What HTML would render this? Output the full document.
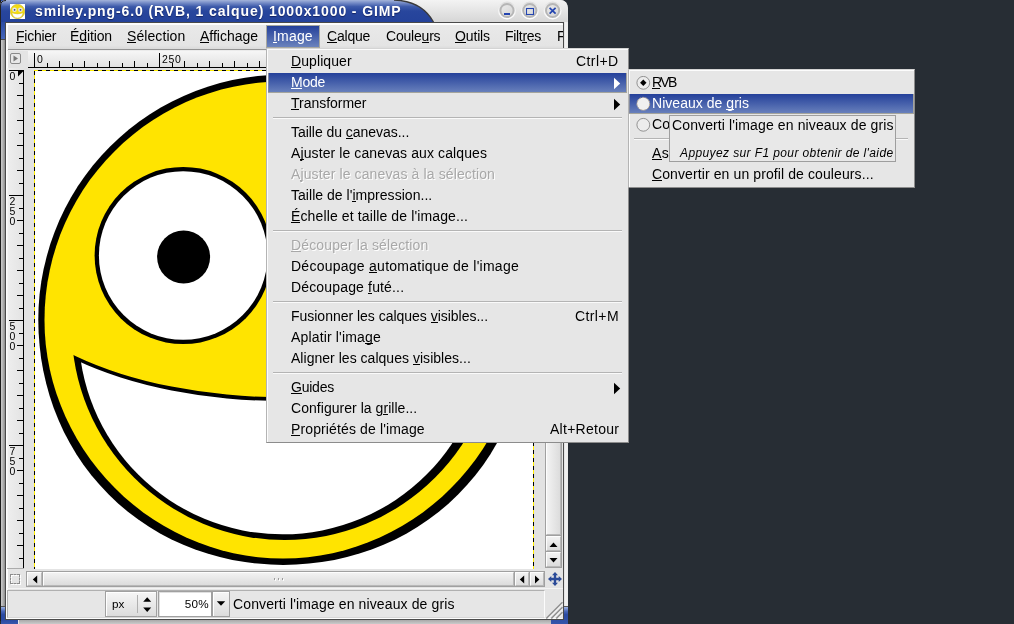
<!DOCTYPE html>
<html><head><meta charset="utf-8"><title>GIMP</title>
<style>
html,body{margin:0;padding:0;}
body{width:1014px;height:624px;overflow:hidden;background:#272d34;position:relative;font-family:"Liberation Sans",sans-serif;font-size:14px;color:#000;}
#root{position:absolute;left:0;top:0;width:1014px;height:624px;}
.a{position:absolute;}
.t{will-change:transform;position:absolute;white-space:pre;line-height:16px;height:16px;font-size:14px;}
u{text-decoration:none;background:linear-gradient(currentColor,currentColor) 0 14px/100% 1px no-repeat;}
.dis{color:#a8a8a8;text-shadow:1px 1px 0 #fff;}
.sep{position:absolute;height:1px;background:#b4b4b4;border-bottom:1px solid #fafafa;}
.hl{position:absolute;background:linear-gradient(#24409a,#6b83bd);box-shadow:inset -1px -1px 0 #a4a49c, inset 1px 0 0 #8088a0;}
.sb{position:absolute;box-sizing:border-box;border:1px solid #b8b8b8;border-top-color:#fdfdfd;border-left-color:#fdfdfd;background:linear-gradient(#f2f2f2,#dcdcdc);}
.btn{position:absolute;box-sizing:border-box;border:1px solid #a0a0a0;background:linear-gradient(#f6f6f6,#dcdcdc);box-shadow:inset 1px 1px 0 #fff;}
</style></head>
<body>
<div class="a" style="left:0;top:0;width:568px;height:621px;background:#e4e4e4;border-radius:6px 8px 0 0;"></div>
<div class="a" style="left:0;top:0;width:1px;height:621px;background:#1c1c1c;"></div>
<div class="a" style="left:1px;top:22px;width:4px;height:599px;background:linear-gradient(90deg,#cacaca 0,#b4b4b4 45%,#8c8c8c 100%);"></div>
<div class="a" style="left:1px;top:0px;width:4px;height:39px;background:linear-gradient(#2a4aa2 0,#2a4aa2 55%,#4666ba 100%);"></div>
<div class="a" style="left:1px;top:39px;width:4px;height:1px;background:#4a4a4a;"></div>
<div class="a" style="left:1px;top:606px;width:4px;height:1px;background:#555;"></div>
<div class="a" style="left:1px;top:607px;width:4px;height:17px;background:linear-gradient(#9ab0e2 0,#4a68b8 25%,#2a4aa2 45%,#2a4aa2 100%);"></div>
<div class="a" style="left:1px;top:620px;width:17px;height:4px;background:linear-gradient(#2a4aa2,#3858ac);"></div>
<div class="a" style="left:18px;top:620px;width:533px;height:4px;background:linear-gradient(#a8a8a8,#cacaca);"></div>
<div class="a" style="left:18px;top:620px;width:1px;height:4px;background:#e8e8e8;"></div>
<div class="a" style="left:551px;top:607px;width:17px;height:17px;background:linear-gradient(#a2b6e6 0,#4a68b8 25%,#2a4aa2 45%,#3454aa 100%);"></div>
<div class="a" style="left:564px;top:606px;width:4px;height:1px;background:#5a5a5a;"></div>
<div class="a" style="left:564px;top:22px;width:4px;height:584px;background:linear-gradient(90deg,#dedede 0,#f2f2f2 40%,#ececec 100%);"></div>
<div class="a" style="left:5px;top:22px;width:559px;height:598px;box-sizing:border-box;border:1px solid #4a4a4a;background:#e4e4e4;"></div>
<div class="a" style="left:6px;top:23px;width:557px;height:596px;box-sizing:border-box;border:1px solid #fdfdfd;border-left-width:2px;border-right-color:#e4e4e4;"></div>
<svg class="a" style="left:0;top:0" width="568" height="22" viewBox="0 0 568 22">
<defs>
<linearGradient id="tb" x1="0" y1="0" x2="0" y2="1"><stop offset="0" stop-color="#a4b4da"/><stop offset="0.1" stop-color="#8095cc"/><stop offset="0.3" stop-color="#3d5aaa"/><stop offset="0.5" stop-color="#28469d"/><stop offset="1" stop-color="#24429a"/></linearGradient>
<linearGradient id="tg" x1="0" y1="0" x2="0" y2="1"><stop offset="0" stop-color="#f3f3f3"/><stop offset="1" stop-color="#d6d6d6"/></linearGradient>
<linearGradient id="bh" x1="0" y1="0" x2="0" y2="1"><stop offset="0" stop-color="#dcdcdc"/><stop offset="0.5" stop-color="#f4f4f4"/><stop offset="1" stop-color="#ffffff"/></linearGradient>
<linearGradient id="bt" x1="0" y1="0" x2="1" y2="1"><stop offset="0" stop-color="#ececec"/><stop offset="1" stop-color="#d4d4d4"/></linearGradient>
</defs>
<path d="M0 22 V6 Q0 0 6 0 H560 Q567.500 0 567.500 7.500 V22 Z" fill="url(#tg)"/>
<path d="M0 22 V6 Q0 0 6 0 H394 Q422 1 433.500 22 Z" fill="url(#tb)"/>
<path d="M394 0 Q422 1 433.500 22" fill="none" stroke="#3a3a3a" stroke-width="1.300"/>
<path d="M0.500 22 V6 Q0.500 0.500 6 0.500" fill="none" stroke="#222" stroke-width="1"/>
<g>
<circle cx="507" cy="10.500" r="9" fill="url(#bh)"/><circle cx="507" cy="10.500" r="6.600" fill="url(#bt)" stroke="#b6b6b6" stroke-width="2"/>
<circle cx="529.800" cy="10.500" r="9" fill="url(#bh)"/><circle cx="529.800" cy="10.500" r="6.600" fill="url(#bt)" stroke="#b6b6b6" stroke-width="2"/>
<circle cx="552.600" cy="10.500" r="9" fill="url(#bh)"/><circle cx="552.600" cy="10.500" r="6.600" fill="url(#bt)" stroke="#b6b6b6" stroke-width="2"/>
<rect x="504" y="13" width="6" height="2" fill="#2445b0"/>
<rect x="526.500" y="8.500" width="7" height="6" fill="none" stroke="#2445b0" stroke-width="1.100"/>
<path d="M549.600 7.800 L555.600 13.600 M555.600 7.800 L549.600 13.600" stroke="#2445b0" stroke-width="1.700" fill="none"/>
</g>
</svg>
<svg class="a" style="left:10px;top:4px" width="15" height="15" viewBox="0 0 15 15"><rect width="15" height="15" fill="#fff"/><circle cx="7.500" cy="7.500" r="7.100" fill="#f4dc10" stroke="#c9b22c" stroke-width="0.700"/><path d="M1.900 8.800 Q7.500 11.200 13.100 8.800 Q12 14 7.500 14 Q3 14 1.900 8.800Z" fill="#fff" stroke="#cdb830" stroke-width="0.400"/><circle cx="4.500" cy="5.700" r="2.300" fill="#e6e6e6"/><circle cx="10.400" cy="5.700" r="2.300" fill="#e6e6e6"/><circle cx="4.600" cy="5.800" r="0.900" fill="#555"/><circle cx="10.500" cy="5.800" r="0.900" fill="#555"/></svg>
<div class="t" style="left:34.500px;top:3px;font-weight:bold;color:#fff;font-size:14px;letter-spacing:0.889px;text-shadow:0 1px 1px rgba(0,0,40,0.5);">smiley.png-6.0 (RVB, 1 calque) 1000x1000 - GIMP</div>
<div class="a" style="left:8px;top:24px;width:555px;height:1px;background:#fdfdfd;"></div>
<div class="a" style="left:8px;top:25px;width:555px;height:24px;background:linear-gradient(#e9e9e9 0,#e4e4e4 85%,#dadada 100%);"></div>
<div class="a" style="left:8px;top:49px;width:555px;height:1px;background:#949494;"></div>
<div class="a" style="left:7px;top:50px;width:556px;height:1px;background:#ebebeb;"></div>
<div class="a" style="left:266px;top:25px;width:54px;height:23px;background:#a8a8a0;"></div>
<div class="a" style="left:267px;top:26px;width:52px;height:21px;background:linear-gradient(#24409a,#6b83bd);"></div>
<div class="t" style="left:16px;top:28px;color:#000;letter-spacing:-0.258px;"><u>F</u>ichier</div>
<div class="t" style="left:70.4px;top:28px;color:#000;letter-spacing:-0.115px;">É<u>d</u>ition</div>
<div class="t" style="left:127.2px;top:28px;color:#000;letter-spacing:0.078px;"><u>S</u>élection</div>
<div class="t" style="left:200px;top:28px;color:#000;letter-spacing:-0.013px;"><u>A</u>ffichage</div>
<div class="t" style="left:272.5px;top:28px;color:#fff;letter-spacing:0.178px;"><u>I</u>mage</div>
<div class="t" style="left:327.2px;top:28px;color:#000;letter-spacing:-0.194px;"><u>C</u>alque</div>
<div class="t" style="left:385.8px;top:28px;color:#000;letter-spacing:-0.204px;">Coule<u>u</u>rs</div>
<div class="t" style="left:455.3px;top:28px;color:#000;letter-spacing:-0.148px;"><u>O</u>utils</div>
<div class="t" style="left:505px;top:28px;color:#000;letter-spacing:-0.302px;">Filt<u>r</u>es</div>
<div class="a" style="left:556.500px;top:28px;width:6px;height:18px;overflow:hidden;"><div class="t" style="left:0;top:0;">F</div></div>
<div class="a" style="left:10px;top:53px;width:11px;height:11px;box-sizing:border-box;border:1px solid #8a8a8a;border-radius:2px;background:#e8e8e8;"></div>
<svg class="a" style="left:10px;top:53px" width="11" height="11"><path d="M3.500 2.500 L8 5.500 L3.500 8.500 Z" fill="#7a7a7a"/></svg>
<svg class="a" style="left:28px;top:51px" width="517" height="17" viewBox="28 51 517 17"><defs><linearGradient id="rg" x1="0" y1="0" x2="0" y2="1"><stop offset="0" stop-color="#f6f6f6"/><stop offset="1" stop-color="#e0e0e0"/></linearGradient></defs><rect x="28" y="51" width="517" height="17" fill="url(#rg)"/><rect x="28" y="67" width="517" height="1" fill="#000"/><rect x="34" y="53" width="1" height="14" fill="#000"/><rect x="47" y="63" width="1" height="4" fill="#000"/><rect x="59" y="61" width="1" height="6" fill="#000"/><rect x="72" y="63" width="1" height="4" fill="#000"/><rect x="84" y="61" width="1" height="6" fill="#000"/><rect x="97" y="63" width="1" height="4" fill="#000"/><rect x="109" y="61" width="1" height="6" fill="#000"/><rect x="122" y="63" width="1" height="4" fill="#000"/><rect x="134" y="61" width="1" height="6" fill="#000"/><rect x="147" y="63" width="1" height="4" fill="#000"/><rect x="159" y="53" width="1" height="14" fill="#000"/><rect x="172" y="63" width="1" height="4" fill="#000"/><rect x="184" y="61" width="1" height="6" fill="#000"/><rect x="197" y="63" width="1" height="4" fill="#000"/><rect x="209" y="61" width="1" height="6" fill="#000"/><rect x="222" y="63" width="1" height="4" fill="#000"/><rect x="234" y="61" width="1" height="6" fill="#000"/><rect x="247" y="63" width="1" height="4" fill="#000"/><rect x="259" y="61" width="1" height="6" fill="#000"/><rect x="272" y="63" width="1" height="4" fill="#000"/><rect x="284" y="53" width="1" height="14" fill="#000"/><rect x="297" y="63" width="1" height="4" fill="#000"/><rect x="309" y="61" width="1" height="6" fill="#000"/><rect x="322" y="63" width="1" height="4" fill="#000"/><rect x="334" y="61" width="1" height="6" fill="#000"/><rect x="347" y="63" width="1" height="4" fill="#000"/><rect x="359" y="61" width="1" height="6" fill="#000"/><rect x="372" y="63" width="1" height="4" fill="#000"/><rect x="384" y="61" width="1" height="6" fill="#000"/><rect x="397" y="63" width="1" height="4" fill="#000"/><rect x="409" y="53" width="1" height="14" fill="#000"/><rect x="422" y="63" width="1" height="4" fill="#000"/><rect x="434" y="61" width="1" height="6" fill="#000"/><rect x="447" y="63" width="1" height="4" fill="#000"/><rect x="459" y="61" width="1" height="6" fill="#000"/><rect x="472" y="63" width="1" height="4" fill="#000"/><rect x="484" y="61" width="1" height="6" fill="#000"/><rect x="497" y="63" width="1" height="4" fill="#000"/><rect x="509" y="61" width="1" height="6" fill="#000"/><rect x="522" y="63" width="1" height="4" fill="#000"/><rect x="534" y="53" width="1" height="14" fill="#000"/></svg>
<div class="t" style="left:36.6px;top:53px;font-size:10.500px;line-height:12px;height:12px;letter-spacing:0.600px;">0</div>
<div class="t" style="left:161.6px;top:53px;font-size:10.500px;line-height:12px;height:12px;letter-spacing:0.600px;">250</div>
<div class="t" style="left:286.6px;top:53px;font-size:10.500px;line-height:12px;height:12px;letter-spacing:0.600px;">500</div>
<div class="t" style="left:411.6px;top:53px;font-size:10.500px;line-height:12px;height:12px;letter-spacing:0.600px;">750</div>
<svg class="a" style="left:7px;top:68px" width="17" height="500" viewBox="7 68 17 500"><defs><linearGradient id="rv" x1="0" y1="0" x2="1" y2="0"><stop offset="0" stop-color="#f8f8f8"/><stop offset="0.1" stop-color="#ededed"/><stop offset="1" stop-color="#e3e3e3"/></linearGradient></defs><rect x="7" y="68" width="17" height="500" fill="url(#rv)"/><rect x="23" y="70" width="1" height="498" fill="#000"/><rect x="9" y="70" width="14" height="1" fill="#000"/><rect x="19" y="83" width="4" height="1" fill="#000"/><rect x="17" y="95" width="6" height="1" fill="#000"/><rect x="19" y="108" width="4" height="1" fill="#000"/><rect x="17" y="120" width="6" height="1" fill="#000"/><rect x="19" y="133" width="4" height="1" fill="#000"/><rect x="17" y="145" width="6" height="1" fill="#000"/><rect x="19" y="158" width="4" height="1" fill="#000"/><rect x="17" y="170" width="6" height="1" fill="#000"/><rect x="19" y="183" width="4" height="1" fill="#000"/><rect x="9" y="195" width="14" height="1" fill="#000"/><rect x="19" y="208" width="4" height="1" fill="#000"/><rect x="17" y="220" width="6" height="1" fill="#000"/><rect x="19" y="233" width="4" height="1" fill="#000"/><rect x="17" y="245" width="6" height="1" fill="#000"/><rect x="19" y="258" width="4" height="1" fill="#000"/><rect x="17" y="270" width="6" height="1" fill="#000"/><rect x="19" y="283" width="4" height="1" fill="#000"/><rect x="17" y="295" width="6" height="1" fill="#000"/><rect x="19" y="308" width="4" height="1" fill="#000"/><rect x="9" y="320" width="14" height="1" fill="#000"/><rect x="19" y="333" width="4" height="1" fill="#000"/><rect x="17" y="345" width="6" height="1" fill="#000"/><rect x="19" y="358" width="4" height="1" fill="#000"/><rect x="17" y="370" width="6" height="1" fill="#000"/><rect x="19" y="383" width="4" height="1" fill="#000"/><rect x="17" y="395" width="6" height="1" fill="#000"/><rect x="19" y="408" width="4" height="1" fill="#000"/><rect x="17" y="420" width="6" height="1" fill="#000"/><rect x="19" y="433" width="4" height="1" fill="#000"/><rect x="9" y="445" width="14" height="1" fill="#000"/><rect x="19" y="458" width="4" height="1" fill="#000"/><rect x="17" y="470" width="6" height="1" fill="#000"/><rect x="19" y="483" width="4" height="1" fill="#000"/><rect x="17" y="495" width="6" height="1" fill="#000"/><rect x="19" y="508" width="4" height="1" fill="#000"/><rect x="17" y="520" width="6" height="1" fill="#000"/><rect x="19" y="533" width="4" height="1" fill="#000"/><rect x="17" y="545" width="6" height="1" fill="#000"/><rect x="19" y="558" width="4" height="1" fill="#000"/><path d="M18 71 H23.500 L18 76.500 Z" fill="#000"/></svg>
<div class="t" style="left:9px;top:70px;font-size:10.500px;line-height:12px;height:12px;width:7px;text-align:center;">0</div>
<div class="t" style="left:9px;top:195px;font-size:10.500px;line-height:12px;height:12px;width:7px;text-align:center;">2</div>
<div class="t" style="left:9px;top:205px;font-size:10.500px;line-height:12px;height:12px;width:7px;text-align:center;">5</div>
<div class="t" style="left:9px;top:215px;font-size:10.500px;line-height:12px;height:12px;width:7px;text-align:center;">0</div>
<div class="t" style="left:9px;top:320px;font-size:10.500px;line-height:12px;height:12px;width:7px;text-align:center;">5</div>
<div class="t" style="left:9px;top:330px;font-size:10.500px;line-height:12px;height:12px;width:7px;text-align:center;">0</div>
<div class="t" style="left:9px;top:340px;font-size:10.500px;line-height:12px;height:12px;width:7px;text-align:center;">0</div>
<div class="t" style="left:9px;top:445px;font-size:10.500px;line-height:12px;height:12px;width:7px;text-align:center;">7</div>
<div class="t" style="left:9px;top:455px;font-size:10.500px;line-height:12px;height:12px;width:7px;text-align:center;">5</div>
<div class="t" style="left:9px;top:465px;font-size:10.500px;line-height:12px;height:12px;width:7px;text-align:center;">0</div>
<div class="a" style="left:24px;top:68px;width:521px;height:501px;background:#e2e2e2;overflow:hidden;"><svg style="position:absolute;left:0;top:0" width="521" height="502" viewBox="24 68 521 502"><rect x="34" y="70" width="500" height="501" fill="#fff"/><path d="M528.5 319.8 L528.2 332.6 L527.2 345.4 L525.7 358.2 L523.5 370.8 L520.6 383.4 L517.2 395.8 L513.1 408.0 L508.3 419.9 L503.0 431.7 L497.0 443.1 L490.4 454.2 L483.2 464.9 L475.4 475.3 L467.0 485.1 L458.1 494.5 L448.7 503.4 L438.9 511.8 L428.5 519.6 L417.8 526.8 L406.7 533.4 L395.3 539.4 L383.5 544.7 L371.6 549.5 L359.4 553.6 L347.0 557.0 L334.4 559.9 L321.8 562.1 L309.0 563.6 L296.2 564.6 L283.4 564.9 L270.6 564.6 L257.8 563.6 L245.0 562.1 L232.4 559.9 L219.8 557.0 L207.4 553.6 L195.2 549.5 L183.3 544.7 L171.5 539.4 L160.1 533.4 L149.0 526.8 L138.3 519.6 L127.9 511.8 L118.1 503.4 L108.7 494.5 L99.8 485.1 L91.4 475.3 L83.6 464.9 L76.4 454.2 L69.8 443.1 L63.8 431.7 L58.5 419.9 L53.7 408.0 L49.6 395.8 L46.2 383.4 L43.3 370.8 L41.1 358.2 L39.6 345.4 L38.6 332.6 L38.3 319.8 L38.6 307.0 L39.6 294.2 L41.3 281.5 L43.7 268.8 L46.7 256.4 L50.3 244.1 L54.6 232.0 L59.5 220.1 L65.0 208.5 L71.1 197.3 L77.8 186.3 L85.1 175.7 L92.9 165.6 L101.3 155.8 L110.1 146.5 L119.4 137.7 L129.2 129.3 L139.3 121.5 L149.9 114.2 L160.8 107.5 L172.1 101.4 L183.7 95.9 L195.6 91.0 L207.7 86.7 L220.0 83.1 L232.4 80.1 L245.1 77.7 L257.8 76.0 L270.6 75.0 L283.4 74.7 L296.2 75.0 L309.0 76.0 L321.7 77.7 L334.4 80.1 L346.8 83.1 L359.1 86.7 L371.2 91.0 L383.1 95.9 L394.7 101.4 L405.9 107.5 L416.9 114.2 L427.5 121.5 L437.6 129.3 L447.4 137.7 L456.7 146.5 L465.5 155.8 L473.9 165.6 L481.7 175.7 L489.0 186.3 L495.7 197.3 L501.8 208.5 L507.3 220.1 L512.2 232.0 L516.5 244.1 L520.1 256.4 L523.1 268.8 L525.5 281.5 L527.2 294.2 L528.2 307.0 Z" fill="#000"/><path d="M521.5 320.0 L521.2 332.5 L520.2 344.9 L518.5 357.3 L516.2 369.6 L513.2 381.7 L509.6 393.6 L505.3 405.3 L500.5 416.8 L495.0 428.0 L489.0 438.9 L482.5 449.5 L475.4 459.8 L467.8 469.6 L459.7 479.1 L451.1 488.1 L442.1 496.7 L432.6 504.8 L422.8 512.4 L412.5 519.5 L402.0 526.0 L391.0 532.0 L379.8 537.5 L368.3 542.3 L356.6 546.6 L344.7 550.2 L332.6 553.2 L320.3 555.5 L307.9 557.2 L295.5 558.2 L283.0 558.5 L270.5 558.2 L258.1 557.2 L245.7 555.5 L233.4 553.2 L221.3 550.2 L209.4 546.6 L197.7 542.3 L186.2 537.5 L175.0 532.0 L164.1 526.0 L153.5 519.5 L143.2 512.4 L133.4 504.8 L123.9 496.7 L114.9 488.1 L106.3 479.1 L98.2 469.6 L90.6 459.8 L83.5 449.5 L77.0 438.9 L71.0 428.0 L65.5 416.8 L60.7 405.3 L56.4 393.6 L52.8 381.7 L49.8 369.6 L47.5 357.3 L45.8 344.9 L44.8 332.5 L44.5 320.0 L44.8 307.5 L45.8 295.1 L47.4 282.7 L49.7 270.4 L52.6 258.3 L56.2 246.3 L60.3 234.5 L65.1 223.0 L70.5 211.7 L76.5 200.8 L83.0 190.1 L90.0 179.8 L97.7 169.9 L105.8 160.4 L114.4 151.4 L123.4 142.8 L132.9 134.7 L142.8 127.0 L153.1 120.0 L163.7 113.5 L174.7 107.5 L186.0 102.1 L197.5 97.3 L209.3 93.2 L221.3 89.6 L233.4 86.7 L245.7 84.4 L258.1 82.8 L270.5 81.8 L283.0 81.5 L295.5 81.8 L307.9 82.8 L320.3 84.4 L332.6 86.7 L344.7 89.6 L356.7 93.2 L368.5 97.3 L380.0 102.1 L391.3 107.5 L402.2 113.5 L412.9 120.0 L423.2 127.0 L433.1 134.7 L442.6 142.8 L451.6 151.4 L460.2 160.4 L468.3 169.9 L476.0 179.8 L483.0 190.1 L489.5 200.8 L495.5 211.7 L500.9 223.0 L505.7 234.5 L509.8 246.3 L513.4 258.3 L516.3 270.4 L518.6 282.7 L520.2 295.1 L521.2 307.5 Z" fill="#ffe400"/><circle cx="183.200" cy="255.500" r="88.600" fill="#000"/><circle cx="183.200" cy="255.500" r="84.300" fill="#fff"/><circle cx="183.600" cy="257" r="26.500" fill="#000"/><circle cx="385.400" cy="255.200" r="88.300" fill="#000"/><circle cx="385.400" cy="255.200" r="84" fill="#fff"/><circle cx="385.400" cy="257" r="26.500" fill="#000"/><clipPath id="mc1"><path d="M-10.500 257 A295 140.300 0 0 0 579.500 257 V700 H-10.500 Z"/></clipPath><clipPath id="mc2"><path d="M-10.500 260.800 A295 140.300 0 0 0 579.500 260.800 V700 H-10.500 Z"/></clipPath><circle cx="284.600" cy="327" r="213" fill="#000" clip-path="url(#mc1)"/><circle cx="282.400" cy="330.400" r="203.900" fill="#fff" clip-path="url(#mc2)"/><g shape-rendering="crispEdges" fill="none" stroke-width="1"><path d="M34 70.500 H534 M34.500 70 V572 M533.500 70 V572" stroke="#ffee00"/><path d="M34 70.500 H534" stroke="#000" stroke-dasharray="4 4" stroke-dashoffset="4"/><path d="M34.500 70 V572" stroke="#000" stroke-dasharray="4 4" stroke-dashoffset="7"/><path d="M533.500 70 V572" stroke="#000" stroke-dasharray="4 4" stroke-dashoffset="4"/></g></svg></div>
<div class="a" style="left:545px;top:68px;width:17px;height:500px;background:#a0a0a0;"></div>
<div class="sb" style="left:546px;top:69px;width:15px;height:466px;background:linear-gradient(90deg,#f2f2f2,#dcdcdc);"></div>
<div class="sb" style="left:546px;top:536px;width:15px;height:15px;"></div>
<div class="sb" style="left:546px;top:552px;width:15px;height:15px;"></div>
<svg class="a" style="left:546px;top:536px" width="14" height="31"><path d="M3.500 11 L7.500 6.500 L11.500 11 Z M3.500 22 L7.500 26.500 L11.500 22 Z" fill="#000"/></svg>
<div class="a" style="left:26px;top:571px;width:519px;height:16px;background:#a0a0a0;"></div>
<div class="sb" style="left:27px;top:572px;width:15px;height:14px;"></div>
<div class="sb" style="left:43px;top:572px;width:471px;height:14px;"></div>
<div class="sb" style="left:515px;top:572px;width:14px;height:14px;"></div>
<div class="sb" style="left:530px;top:572px;width:14px;height:14px;"></div>
<svg class="a" style="left:26px;top:572px" width="519" height="14"><path d="M11.200 3.500 L6.800 7.500 L11.200 11.500 Z M498.200 3.500 L493.800 7.500 L498.200 11.500 Z M509 3.500 L513.400 7.500 L509 11.500 Z" fill="#000"/><g fill="#9a9a9a"><rect x="248" y="6" width="1" height="2"/><rect x="252" y="6" width="1" height="2"/><rect x="256" y="6" width="1" height="2"/></g><g fill="#fff"><rect x="249" y="7" width="1" height="2"/><rect x="253" y="7" width="1" height="2"/><rect x="257" y="7" width="1" height="2"/></g></svg>
<div class="a" style="left:11px;top:575px;width:10px;height:10px;box-sizing:border-box;border:1px dashed #fff;"></div>
<div class="a" style="left:10px;top:574px;width:10px;height:10px;box-sizing:border-box;border:1px dashed #8c8c8c;"></div>
<svg class="a" style="left:548px;top:572px" width="14" height="14" viewBox="0 0 14 14"><path d="M7 0 L10 3.300 H8.200 V5.800 H10.700 V4 L14 7 L10.700 10 V8.200 H8.200 V10.700 H10 L7 14 L4 10.700 H5.800 V8.200 H3.300 V10 L0 7 L3.300 4 V5.800 H5.800 V3.300 H4 Z" fill="#2a4a98"/></svg>
<div class="a" style="left:7px;top:568px;width:17px;height:1px;background:#ababab;"></div>
<div class="a" style="left:7px;top:588px;width:556px;height:1px;background:#f4f4f4;"></div>
<div class="a" style="left:7px;top:590px;width:538px;height:28px;box-sizing:border-box;border:1px solid #b0b0b0;border-right-color:#fcfcfc;border-bottom-color:#d6d6d6;background:#e6e6e6;"></div>
<div class="btn" style="left:105px;top:591px;width:52px;height:26px;"></div>
<div class="a" style="left:137px;top:595px;width:1px;height:18px;background:#b0b0b0;"></div>
<div class="t" style="left:112px;top:596px;font-size:11.700px;">px</div>
<svg class="a" style="left:142px;top:596px" width="10" height="17"><path d="M1.200 5.800 L5.200 1.200 L9.200 5.800 Z M1.200 11.500 L5.200 16.100 L9.200 11.500 Z" fill="#000"/></svg>
<div class="a" style="left:158px;top:591px;width:54px;height:26px;box-sizing:border-box;border:1px solid #a0a0a0;background:#fff;box-shadow:inset 1px 1px 0 #e0e0e0;"></div>
<div class="t" style="left:160px;top:596px;width:49px;text-align:right;font-size:11.700px;letter-spacing:0.300px;">50%</div>
<div class="btn" style="left:212px;top:591px;width:18px;height:26px;"></div>
<svg class="a" style="left:215px;top:600px" width="12" height="8"><path d="M1.800 1.300 H10.200 L6 5.800 Z" fill="#000"/></svg>
<div class="t" style="left:233px;top:596px;letter-spacing:0.116px;">Converti l'image en niveaux de gris</div>
<svg class="a" style="left:546px;top:602px" width="17" height="17"><g><path d="M16.500 1.700 L1.700 16.500 M16.500 6.700 L6.700 16.500 M16.500 11.700 L11.700 16.500" stroke="#fff" stroke-width="1.200"/><path d="M16.500 0.300 L0.300 16.500 M16.500 5.300 L5.300 16.500 M16.500 10.300 L10.300 16.500" stroke="#8e8e8e" stroke-width="1.500"/></g></svg>
<div class="a" style="left:266px;top:48px;width:363px;height:395px;box-sizing:border-box;border:1px solid #b4b4b4;border-top-color:#d4d4d4;border-right-color:#8c8c8c;border-bottom-color:#8c8c8c;background:#e6e6e6;box-shadow:inset 1px 1px 0 #fcfcfc;"></div>
<div class="hl" style="left:268px;top:73px;width:359px;height:20px;"></div>
<div class="t" style="left:291px;top:53px;letter-spacing:0.086px;"><u>D</u>upliquer</div>
<div class="t" style="left:576.4px;top:53px;letter-spacing:0.423px;">Ctrl+D</div>
<div class="t" style="left:291px;top:74px;color:#fff;letter-spacing:-0.255px;"><u>M</u>ode</div>
<svg class="a" style="left:613px;top:77px" width="8" height="13"><path d="M1 0.800 L7.200 6.500 L1 12.200 Z" fill="#fff"/></svg>
<div class="t" style="left:291px;top:95px;letter-spacing:-0.02px;"><u>T</u>ransformer</div>
<svg class="a" style="left:613px;top:98px" width="8" height="13"><path d="M1 0.800 L7.200 6.500 L1 12.200 Z" fill="#000"/></svg>
<div class="sep" style="left:273px;top:117px;width:349px;"></div>
<div class="t" style="left:291px;top:124px;letter-spacing:-0.043px;">Taille du <u>c</u>anevas...</div>
<div class="t" style="left:291px;top:145px;letter-spacing:0.1px;">A<u>j</u>uster le canevas aux calques</div>
<div class="t dis" style="left:291px;top:166px;letter-spacing:0.121px;">A<u>j</u>uster le canevas à la sélection</div>
<div class="t" style="left:291px;top:187px;letter-spacing:0.032px;">Taille de l'<u>i</u>mpression...</div>
<div class="t" style="left:291px;top:208px;letter-spacing:0.126px;"><u>É</u>chelle et taille de l'image...</div>
<div class="sep" style="left:273px;top:230px;width:349px;"></div>
<div class="t dis" style="left:291px;top:237px;letter-spacing:0.132px;"><u>D</u>écouper la sélection</div>
<div class="t" style="left:291px;top:258px;letter-spacing:0.255px;">Découpage <u>a</u>utomatique de l'image</div>
<div class="t" style="left:291px;top:279px;letter-spacing:0.157px;">Découpage <u>f</u>uté...</div>
<div class="sep" style="left:273px;top:301px;width:349px;"></div>
<div class="t" style="left:291px;top:308px;letter-spacing:-0.02px;">Fusionner les calques <u>v</u>isibles...</div>
<div class="t" style="left:575px;top:308px;letter-spacing:0.398px;">Ctrl+M</div>
<div class="t" style="left:291px;top:329px;letter-spacing:0.154px;">Aplatir l'ima<u>g</u>e</div>
<div class="t" style="left:291px;top:350px;letter-spacing:0.027px;">Aligner les calques <u>v</u>isibles...</div>
<div class="sep" style="left:273px;top:372px;width:349px;"></div>
<div class="t" style="left:291px;top:379px;letter-spacing:-0.227px;"><u>G</u>uides</div>
<svg class="a" style="left:613px;top:382px" width="8" height="13"><path d="M1 0.800 L7.200 6.500 L1 12.200 Z" fill="#000"/></svg>
<div class="t" style="left:291px;top:400px;letter-spacing:0.04px;">Configurer la g<u>r</u>ille...</div>
<div class="t" style="left:291px;top:421px;letter-spacing:0.125px;"><u>P</u>ropriétés de l'image</div>
<div class="t" style="left:549.8px;top:421px;letter-spacing:0.266px;">Alt+Retour</div>
<div class="a" style="left:628px;top:69px;width:287px;height:119px;box-sizing:border-box;border:1px solid #b4b4b4;border-top-color:#d4d4d4;border-right-color:#8c8c8c;border-bottom-color:#8c8c8c;background:#e6e6e6;box-shadow:inset 1px 1px 0 #fcfcfc;"></div>
<div class="hl" style="left:629px;top:94px;width:285px;height:20px;"></div>
<svg class="a" style="left:636px;top:76px" width="15" height="56"><circle cx="7.300" cy="6.800" r="6.400" fill="#ececec" stroke="#7c7c7c" stroke-width="0.800"/><path d="M7.300 3.600 L10.500 6.800 L7.300 10 L4.100 6.800 Z" fill="#000"/><circle cx="7.300" cy="27.800" r="6.400" fill="#f0f0f0" stroke="#b8aa98" stroke-width="1" stroke-dasharray="2.500 1"/><circle cx="7.300" cy="48.800" r="6.400" fill="#ececec" stroke="#7c7c7c" stroke-width="0.800"/></svg>
<div class="t" style="left:652px;top:74px;letter-spacing:-1.645px;"><u>R</u>VB</div>
<div class="t" style="left:652px;top:95px;color:#fff;letter-spacing:0.034px;">Niveaux de <u>g</u>ris</div>
<div class="t" style="left:652px;top:116px;letter-spacing:0.119px;">Couleurs indexées...</div>
<div class="t" style="left:652px;top:145px;letter-spacing:0.421px;"><u>A</u>ssigner un profil de couleurs...</div>
<div class="t" style="left:652px;top:166px;letter-spacing:0.103px;"><u>C</u>onvertir en un profil de couleurs...</div>
<div class="sep" style="left:634px;top:138px;width:274px;"></div>
<div class="a" style="left:669px;top:115px;width:227px;height:47px;box-sizing:border-box;border:1px solid #9e9e9e;background:#e8e8e8;"></div>
<div class="t" style="left:672px;top:117px;letter-spacing:0.118px;">Converti l'image en niveaux de gris</div>
<div class="t" style="left:679.500px;top:146px;font-style:italic;font-size:12px;line-height:14px;height:14px;letter-spacing:0.39px;">Appuyez sur F1 pour obtenir de l'aide</div>
</body></html>
